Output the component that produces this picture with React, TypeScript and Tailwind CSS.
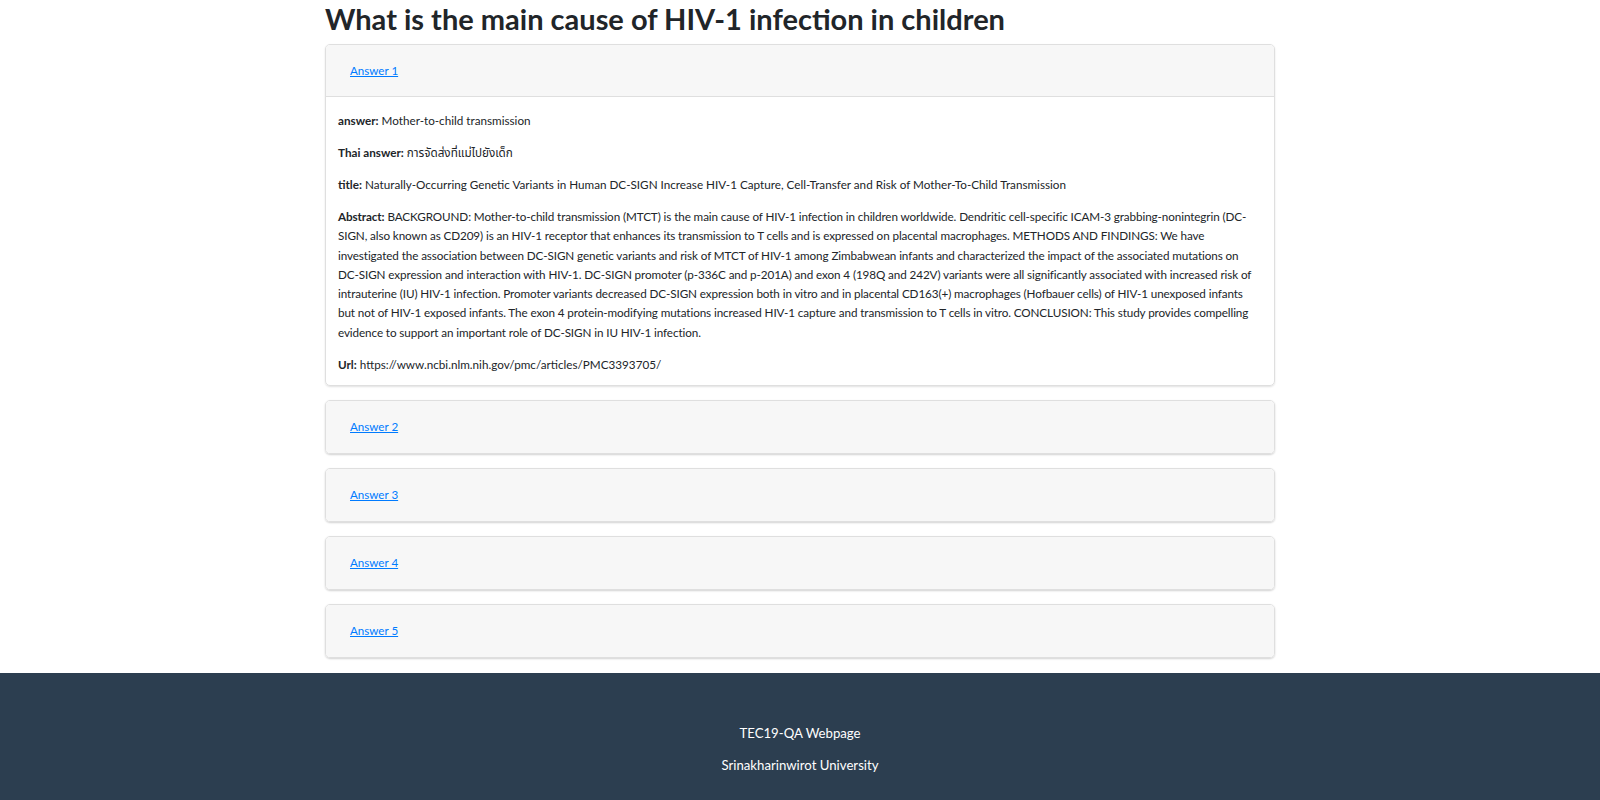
import React from "react";

const abstract =
  "BACKGROUND: Mother-to-child transmission (MTCT) is the main cause of HIV-1 infection in children worldwide. Dendritic cell-specific ICAM-3 grabbing-nonintegrin (DC-SIGN, also known as CD209) is an HIV-1 receptor that enhances its transmission to T cells and is expressed on placental macrophages. METHODS AND FINDINGS: We have investigated the association between DC-SIGN genetic variants and risk of MTCT of HIV-1 among Zimbabwean infants and characterized the impact of the associated mutations on DC-SIGN expression and interaction with HIV-1. DC-SIGN promoter (p-336C and p-201A) and exon 4 (198Q and 242V) variants were all significantly associated with increased risk of intrauterine (IU) HIV-1 infection. Promoter variants decreased DC-SIGN expression both in vitro and in placental CD163(+) macrophages (Hofbauer cells) of HIV-1 unexposed infants but not of HIV-1 exposed infants. The exon 4 protein-modifying mutations increased HIV-1 capture and transmission to T cells in vitro. CONCLUSION: This study provides compelling evidence to support an important role of DC-SIGN in IU HIV-1 infection.";

function Header({ label, last }: { label: string; last?: boolean }) {
  return (
    <div
      className={
        "h-[52px] flex items-center px-[24px] pt-[1px] bg-[#f7f7f7] " +
        (last ? "rounded-[4px]" : "border-b border-[#dfdfdf] rounded-t-[4px]")
      }
    >
      <a href="#" className="text-[11.6px] text-[#007bff] underline leading-[18px]">
        {label}
      </a>
    </div>
  );
}

function Field({
  label,
  children,
  tight,
  lastItem,
}: {
  label: string;
  children: React.ReactNode;
  tight?: boolean;
  lastItem?: boolean;
}) {
  return (
    <p
      className={
        "leading-[19.25px] " +
        (lastItem ? "mb-[11px] " : "mb-[12.8px] ") +
        (tight ? "tracking-[-0.1px]" : "")
      }
    >
      <b className="font-bold">{label}</b> {children}
    </p>
  );
}

export default function App() {
  return (
    <div
      className="min-h-screen bg-white text-[#212529] flex flex-col"
      style={{ fontFamily: "Lato, 'Noto Sans', 'Noto Sans Thai', sans-serif" }}
    >
      <div className="w-[950px] mx-auto">
        <h1 className="text-[29px] font-bold leading-[38px] mb-[6px] text-[#212529]">
          What is the main cause of HIV-1 infection in children
        </h1>
        <div className="border border-[#dfdfdf] rounded-[5px] shadow-[0_1px_2px_rgba(0,0,0,0.12)] mb-[14px]">
          <Header label="Answer 1" />
          <div className="px-[12px] pt-[14px] text-[11.7px]">
            <Field label="answer:">Mother-to-child transmission</Field>
            <Field label="Thai answer:">การจัดส่งที่แม่ไปยังเด็ก</Field>
            <Field label="title:">
              Naturally-Occurring Genetic Variants in Human DC-SIGN Increase HIV-1 Capture, Cell-Transfer and Risk of Mother-To-Child Transmission
            </Field>
            <Field label="Abstract:" tight>
              {abstract}
            </Field>
            <Field label="Url:" lastItem>
              https://www.ncbi.nlm.nih.gov/pmc/articles/PMC3393705/
            </Field>
          </div>
        </div>
        {["Answer 2", "Answer 3", "Answer 4", "Answer 5"].map((a) => (
          <div
            key={a}
            className="border border-[#dfdfdf] rounded-[5px] shadow-[0_1px_2px_rgba(0,0,0,0.18)] mb-[14px]"
          >
            <Header label={a} last />
          </div>
        ))}
      </div>
      <footer className="mt-[1px] bg-[#2c3e50] text-white text-[13.2px] text-center pt-[51px] pb-[40px] flex-1">
        <p className="mb-[12.8px] leading-[19.2px]">TEC19-QA Webpage</p>
        <p className="mb-[12.8px] leading-[19.2px]">Srinakharinwirot University</p>
      </footer>
    </div>
  );
}
